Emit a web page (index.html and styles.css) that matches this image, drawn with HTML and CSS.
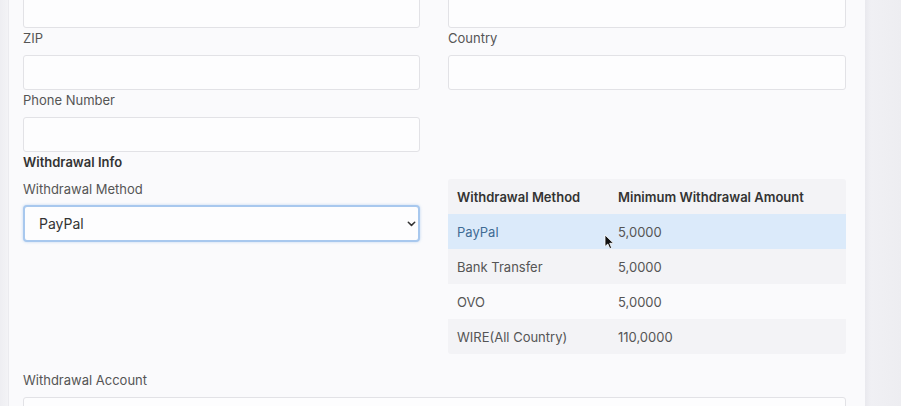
FILE: index.html
```html
<!DOCTYPE html>
<html lang="en">
<head>
    <meta charset="UTF-8">
    <title>Withdrawal Settings</title>
    <link rel="stylesheet" href="styles.css">
</head>
<body>
    <div class="page">
        <div class="card">
            <div class="form-grid">
                <input class="field-input" type="text">
                <input class="field-input" type="text">

                <div class="field">
                    <label>ZIP</label>
                    <input class="field-input" type="text">
                </div>
                <div class="field">
                    <label>Country</label>
                    <input class="field-input" type="text">
                </div>

                <div class="field">
                    <label>Phone Number</label>
                    <input class="field-input" type="text">
                </div>
                <div></div>

                <h4 class="section-title">Withdrawal Info</h4>
                <div></div>

                <div class="field method">
                    <label>Withdrawal Method</label>
                    <div class="select-wrap">
                        <select class="field-select">
                            <option>PayPal</option>
                            <option>Bank Transfer</option>
                            <option>OVO</option>
                            <option>WIRE(All Country)</option>
                        </select>
                        <svg class="chevron" width="9" height="6" viewBox="0 0 9 6"><path d="M1.3 1.2 L4.5 4.4 L7.7 1.2" fill="none" stroke="#333" stroke-width="1.5" stroke-linecap="round" stroke-linejoin="round"/></svg>
                    </div>
                </div>
                <div class="table-wrap">
                    <table class="min-table">
                        <thead>
                            <tr><th>Withdrawal Method</th><th>Minimum Withdrawal Amount</th></tr>
                        </thead>
                        <tbody>
                            <tr class="active"><td>PayPal</td><td>5,0000</td></tr>
                            <tr class="striped"><td>Bank Transfer</td><td>5,0000</td></tr>
                            <tr><td>OVO</td><td>5,0000</td></tr>
                            <tr class="striped"><td>WIRE(All Country)</td><td>110,0000</td></tr>
                        </tbody>
                    </table>
                    <svg class="cursor" width="11" height="16" viewBox="0 0 11 16"><path d="M1 1 L1 12.5 L3.8 10 L5.8 14.6 L7.6 13.8 L5.7 9.3 L9.5 9.3 Z" fill="#111" stroke="#fff" stroke-width="0.8" stroke-linejoin="round"/></svg>
                </div>

                <div class="field wide">
                    <label>Withdrawal Account</label>
                    <input class="field-input" type="text">
                </div>
            </div>
        </div>
        <div class="side"></div>
    </div>
</body>
</html>
```

FILE: styles.css
```css
body {
    margin: 0;
    background-color: #efeff3;
    font-family: 'Inter', 'Liberation Sans', sans-serif;
    font-size: 13px;
    color: #555;
    overflow: hidden;
}
.page {
    display: flex;
    height: 406px;
    padding-left: 8px;
    background: linear-gradient(90deg, #eeeef2 0, #f3f3f6 8px);
}
.card {
    width: 857px;
    box-sizing: border-box;
    padding: 0 19px 0 15px;
    background-color: #fafafc;
    border-left: 1px solid #ebebef;
    overflow: hidden;
}
.side {
    flex: 1;
    background: linear-gradient(90deg, #e9e9ee 0, #f0f0f4 6px, #ededf1 100%);
}
.form-grid {
    display: grid;
    grid-template-columns: 397px 398px;
    column-gap: 28px;
    margin-top: -7px;
    margin-left: -1px;
}
.field {
    display: flex;
    flex-direction: column;
}
.field label {
    line-height: 20px;
    margin-top: 0;
    margin-bottom: 7px;
    color: #555;
}
.field.method label {
    margin-top: 7px;
    margin-bottom: 6px;
}
.field.wide {
    grid-column: 1 / span 2;
    margin-top: 16px;
}
.field-input {
    height: 35px;
    box-sizing: border-box;
    border: 1px solid #e2e2e6;
    border-radius: 3px;
    background-color: #fdfdfe;
    font-family: inherit;
    font-size: 14px;
    padding: 0 12px;
    outline: none;
}
.section-title {
    margin: 0;
    line-height: 20px;
    font-size: 13px;
    font-weight: 600;
    color: #333;
}
.select-wrap {
    position: relative;
}
.field-select {
    width: 100%;
    height: 37px;
    box-sizing: border-box;
    border: 2px solid #a8c8ee;
    border-radius: 4px;
    background-color: #fdfdfe;
    box-shadow: 0 0 3px rgba(120, 170, 230, 0.45);
    font-family: inherit;
    font-size: 14px;
    color: #333;
    padding: 0 14px;
    appearance: none;
    outline: none;
}
.chevron {
    position: absolute;
    right: 4px;
    top: 16px;
}
.table-wrap {
    position: relative;
    margin-top: 7px;
}
.min-table {
    width: 100%;
    border-collapse: collapse;
    border-radius: 3px;
    overflow: hidden;
}
.min-table th,
.min-table td {
    height: 35px;
    padding: 0 9px;
    text-align: left;
    line-height: 20px;
}
.min-table th {
    background-color: #f3f3f6;
    font-weight: 600;
    color: #333;
}
.min-table th:first-child,
.min-table td:first-child {
    width: 143px;
}
.min-table tr.striped td {
    background-color: #f3f3f6;
}
.min-table tr.active td {
    background-color: #dbeafa;
    color: #3f6b94;
}
.min-table tr.active td:last-child {
    color: #555;
}
.cursor {
    position: absolute;
    left: 156px;
    top: 55px;
}
```
